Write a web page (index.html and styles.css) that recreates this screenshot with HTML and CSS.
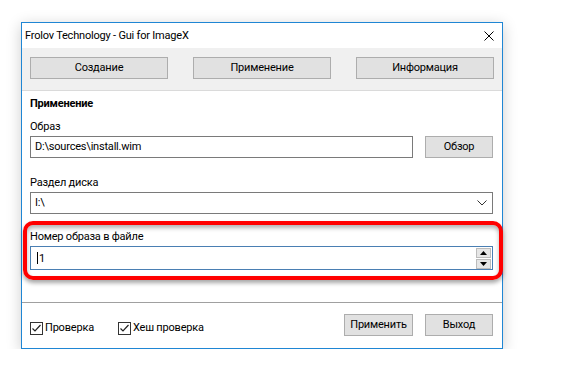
FILE: index.html
```html
<!DOCTYPE html>
<html lang="ru">
<head>
  <meta charset="UTF-8" />
  <title>Frolov Technology - Gui for ImageX</title>
  <link rel="stylesheet" href="styles.css">
</head>
<body>

  <div class="window">
    <div class="titlebar">
      <span class="title">Frolov Technology - Gui for ImageX</span>
      <svg class="close" width="10" height="10" viewBox="0 0 10 10">
        <path d="M0.5 0.5L9.5 9.5M9.5 0.5L0.5 9.5" stroke="#000" stroke-width="1" fill="none"/>
      </svg>
    </div>

    <div class="tabs">
      <button class="btn tab">Создание</button>
      <button class="btn tab">Применение</button>
      <button class="btn tab">Информация</button>
    </div>

    <div class="content">
      <div class="heading">Применение</div>

      <div class="field first">
        <div class="label">Образ</div>
        <div class="row">
          <div class="textbox">D:\sources\install.wim</div>
          <button class="btn small">Обзор</button>
        </div>
      </div>

      <div class="field">
        <div class="label">Раздел диска</div>
        <div class="combo">
          <span>I:\</span>
          <svg class="chevron" width="10" height="6" viewBox="0 0 10 6">
            <path d="M0.5 0.5L5 5L9.5 0.5" stroke="#333" stroke-width="1" fill="none"/>
          </svg>
        </div>
      </div>

      <div class="field spin-field">
        <div class="label">Номер образа в файле</div>
        <div class="spin">
          <span class="caret"></span><span>1</span>
          <div class="spin-btns">
            <span class="spin-btn"><svg width="7" height="4" viewBox="0 0 7 4"><path d="M3.5 0L7 4H0Z" fill="#000"/></svg></span>
            <span class="spin-btn"><svg width="7" height="4" viewBox="0 0 7 4"><path d="M0 0H7L3.5 4Z" fill="#000"/></svg></span>
          </div>
        </div>
        <div class="highlight"></div>
      </div>
    </div>

    <div class="footer">
      <label class="check"><span class="box"><svg width="11" height="11" viewBox="0 0 11 11"><path d="M1.5 5.5L4 8L9.5 2" stroke="#222" stroke-width="1.2" fill="none"/></svg></span>Проверка</label>
      <label class="check"><span class="box"><svg width="11" height="11" viewBox="0 0 11 11"><path d="M1.5 5.5L4 8L9.5 2" stroke="#222" stroke-width="1.2" fill="none"/></svg></span>Хеш проверка</label>
      <div class="spacer"></div>
      <button class="btn small apply">Применить</button>
      <button class="btn small">Выход</button>
    </div>
  </div>

</body>
</html>
```

FILE: styles.css
```css
* { box-sizing: border-box; }

body {
  margin: 0;
  padding: 22px 0 0 21px;
  background: #ffffff;
  color: #000;
  font-family: Roboto, 'Noto Sans', sans-serif;
  font-size: 11px;
  letter-spacing: -0.2px;
}

.window {
  width: 482px;
  height: 327px;
  border: 1px solid #1f86d4;
  background: #fff;
  box-shadow: 0 3px 14px rgba(0,0,0,0.2);
  display: flex;
  flex-direction: column;
}

.titlebar {
  height: 25px;
  display: flex;
  align-items: center;
  justify-content: space-between;
  padding: 0 8px 0 3px;
  background: #fff;
}

.title {
  line-height: 16px;
}

.tabs {
  height: 43px;
  background: #f0f0f0;
  border-bottom: 1px solid #dadada;
  display: flex;
  justify-content: space-between;
  padding: 9px 8px 0 8px;
}

.btn {
  height: 22px;
  border: 1px solid #adadad;
  background: #e1e1e1;
  font-family: inherit;
  font-size: 11px;
  letter-spacing: -0.2px;
  color: #000;
  padding: 0;
  line-height: 18px;
}

.tab { width: 138px; }

.content {
  height: 212px;
  padding: 5px 9px 0 8px;
  border-bottom: 1px solid #a0a0a0;
}

.heading {
  font-weight: bold;
  line-height: 16px;
}

.field { margin-top: 17px; }
.field.first { margin-top: 7px; }
.field.spin-field { margin-top: 15px; }

.label {
  line-height: 16px;
  margin-bottom: 1px;
}

.row {
  display: flex;
  justify-content: space-between;
}

.textbox {
  width: 383px;
  height: 22px;
  border: 1px solid #7a7a7a;
  padding: 0 4px;
  line-height: 20px;
}

.small { width: 68px; }

.combo {
  height: 22px;
  border: 1px solid #7a7a7a;
  padding: 0 5px 0 4px;
  line-height: 20px;
  display: flex;
  align-items: center;
  justify-content: space-between;
}

.spin-field { position: relative; }

.spin {
  height: 24px;
  border: 1px solid #4a7fb3;
  padding: 0 1px 0 6px;
  display: flex;
  align-items: center;
}

.caret {
  width: 1px;
  height: 12px;
  background: #000;
  margin-right: 1px;
}

.spin-btns {
  margin-left: auto;
  display: flex;
  flex-direction: column;
  gap: 1px;
}

.spin-btn {
  width: 15px;
  height: 10px;
  border: 1px solid #bcbcbc;
  background: #e6e6e6;
  display: flex;
  align-items: center;
  justify-content: center;
}

.highlight {
  position: absolute;
  left: -7px;
  right: -10px;
  top: -8px;
  bottom: -10px;
  border: 4px solid #ff0000;
  border-radius: 10px;
  box-shadow: 0 3px 4px rgba(0,0,0,0.35), inset 0 3px 4px rgba(0,0,0,0.3);
  pointer-events: none;
}

.footer {
  flex: 1;
  display: flex;
  align-items: flex-start;
  padding: 11px 9px 0 8px;
}

.check {
  display: flex;
  align-items: center;
  margin-top: 6px;
  margin-right: 24px;
  line-height: 16px;
}

.box {
  width: 13px;
  height: 13px;
  border: 1px solid #333;
  background: #fff;
  display: flex;
  align-items: center;
  justify-content: center;
  margin-right: 2px;
}

.spacer { flex: 1; }

.apply {
  width: 69px;
  margin-right: 12px;
}
```
